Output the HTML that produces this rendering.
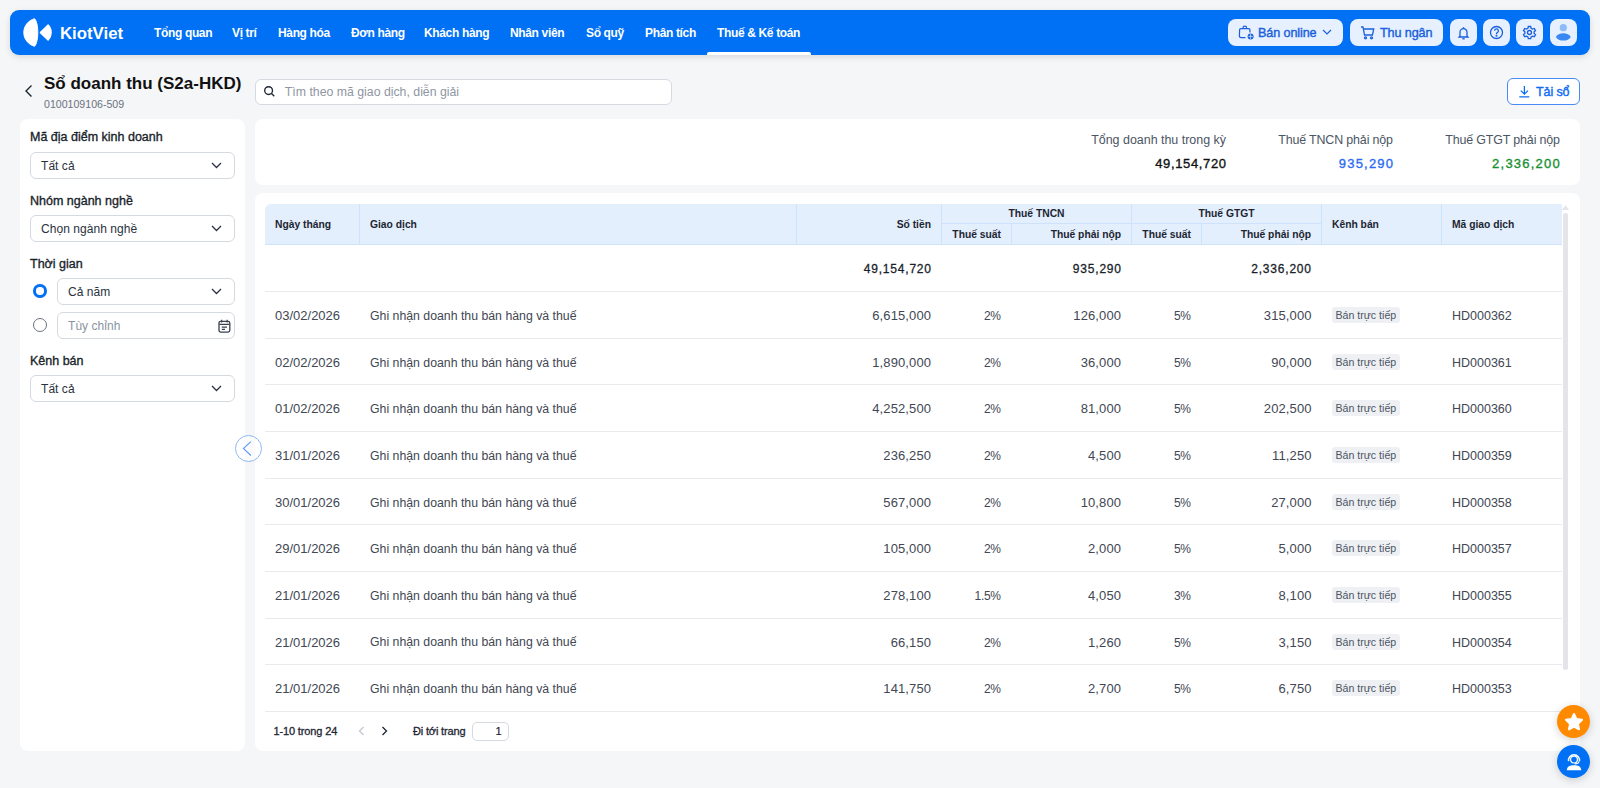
<!DOCTYPE html>
<html lang="vi"><head><meta charset="utf-8"><title>Sổ doanh thu</title>
<style>
*{box-sizing:border-box;margin:0;padding:0}
html,body{width:1600px;height:788px;overflow:hidden}
body{background:#F5F6F8;font-family:"Liberation Sans",sans-serif;color:#1E2532;position:relative}
.abs{position:absolute}
/* navbar */
.nav{position:absolute;left:10px;top:10px;width:1580px;height:45px;background:#0070F4;border-radius:9px;box-shadow:0 2px 6px rgba(0,0,0,.12)}
.logo{position:absolute;left:13px;top:8px}
.brand{position:absolute;left:50px;top:13.5px;font-weight:bold;font-size:16.8px;color:#fff;letter-spacing:0}
.menu{position:absolute;top:16px;font-size:12px;font-weight:bold;color:#fff;white-space:nowrap;letter-spacing:-0.35px}
.uline{position:absolute;left:697px;top:42px;width:104px;height:3px;background:#fff;border-radius:2px 2px 0 0}
.nbtn{position:absolute;top:9px;height:27px;background:#E6F0FE;border-radius:8px;color:#1A5FDC;font-size:12.6px;-webkit-text-stroke-width:0.4px;white-space:nowrap;letter-spacing:-0.1px}
.nbtn span{position:absolute;top:6.5px}
/* title */
.back{position:absolute;left:24px;top:84px}
.title{position:absolute;left:44px;top:73.5px;font-size:17px;font-weight:bold;color:#111;white-space:nowrap}
.sub{position:absolute;left:44px;top:98px;font-size:10.6px;color:#6B7280;white-space:nowrap}
.search{position:absolute;left:255px;top:78.7px;width:416.5px;height:26.3px;background:#fff;border:1px solid #D5D9E0;border-radius:6px}
.search .ph{position:absolute;left:28.8px;top:5.2px;font-size:12.3px;color:#8F96A3;white-space:nowrap}
.dl{position:absolute;left:1507px;top:78px;width:73px;height:27px;background:#fff;border:1px solid #4A8AF4;border-radius:6px;color:#0C6CF2;font-size:12.5px;-webkit-text-stroke-width:0.4px;letter-spacing:-0.1px}
/* sidebar */
.side{position:absolute;left:20px;top:119px;width:225px;height:632px;background:#fff;border-radius:8px}
.lbl{position:absolute;left:10px;font-size:12.5px;-webkit-text-stroke-width:0.35px;color:#1A1F2B;white-space:nowrap;margin-top:0.5px}
.sel{position:absolute;left:10px;width:205px;height:27px;border:1px solid #D5D9E0;border-radius:6px;background:#fff}
.sel .tx{position:absolute;left:10px;top:6.3px;font-size:12px;color:#2A3140;white-space:nowrap;letter-spacing:0.05px}
.sel svg{position:absolute;right:12px;top:9px}
.radio{position:absolute;left:13px;width:14px;height:14px;border-radius:50%}
/* summary card */
.card{position:absolute;background:#fff;border-radius:8px}
.sl{position:absolute;top:133px;font-size:12.45px;color:#4B5563;white-space:nowrap;text-align:right}
.sv{position:absolute;top:155.5px;font-size:13px;-webkit-text-stroke-width:0.35px;white-space:nowrap;text-align:right}
/* table */
.thead{position:absolute;left:265px;top:204px;width:1297px;height:41px;background:#E3EFFD;border-bottom:1px solid #D0E2FA;border-radius:6px 0 0 0}
.vs{position:absolute;width:1px;background:#CFE2FB}
.th{position:absolute;font-size:10.3px;font-weight:bold;color:#1E2532;white-space:nowrap}
.row{position:absolute;left:265px;width:1297px;height:46.65px;border-top:1px solid #E8EAEE}
.c{position:absolute;top:16.95px;font-size:12.3px;color:#414753;white-space:nowrap}
.date{left:10px;font-size:13px;top:16px}
.desc{left:105px}
.amt{top:16px;right:630.88px;font-size:13px;letter-spacing:0.12px}
.r1{top:17.2px;right:561.3px;font-size:12px;letter-spacing:-0.3px}
.t1{top:16px;right:440.88px;font-size:13px;letter-spacing:0.12px}
.r2{top:17.2px;right:371.3px;font-size:12px;letter-spacing:-0.3px}
.t2{top:16px;right:250.38px;font-size:13px;letter-spacing:0.12px}
.badge{position:absolute;left:1067px;top:15px;height:16px;padding:0 3.5px;background:#EEF0F3;border-radius:3px;font-size:10.6px;color:#4B5563;line-height:16px;white-space:nowrap}
.code{left:1187px;font-size:12.5px;top:17.2px}
.tot{position:absolute;top:261.5px;font-size:12px;letter-spacing:0.8px;-webkit-text-stroke:0.3px #1A1F2B;color:#1A1F2B;white-space:nowrap}
.pg{position:absolute;top:724.5px;font-size:11px;-webkit-text-stroke-width:0.3px;color:#1E2532;white-space:nowrap}
.fab{position:absolute;left:1557px;width:33px;height:33px;border-radius:50%;box-shadow:0 2px 8px rgba(0,0,0,.18)}

</style></head><body>
<div class="nav">
  <svg class="logo" width="32" height="30" viewBox="0 0 32 30">
    <path d="M11.6 0.7C4.9 2.6 0.8 8.3 0.8 14.5C0.8 20.7 4.9 26.4 11.6 28.3C13.7 26 14.8 20.3 14.8 14.5C14.8 8.7 13.7 3 11.6 0.7Z" fill="#fff" stroke="#fff" stroke-width="1" stroke-linejoin="round"/>
    <path d="M17.5 14.6L25.1 7C27.2 9.2 28.1 11.8 28.1 14.4C28.1 17 27.2 19.6 25.1 21.9Z" fill="#fff" stroke="#fff" stroke-width="1.5" stroke-linejoin="round"/>
  </svg>
  <div class="brand">KiotViet</div>
  <div class="menu" style="left:144px">Tổng quan</div>
  <div class="menu" style="left:222px">Vị trí</div>
  <div class="menu" style="left:268px">Hàng hóa</div>
  <div class="menu" style="left:341px">Đơn hàng</div>
  <div class="menu" style="left:414px">Khách hàng</div>
  <div class="menu" style="left:500px">Nhân viên</div>
  <div class="menu" style="left:576px">Sổ quỹ</div>
  <div class="menu" style="left:635px">Phân tích</div>
  <div class="menu" style="left:707px">Thuế &amp; Kế toán</div>
  <div class="uline"></div>
  <div class="nbtn" style="left:1218px;width:115px">
    <svg style="position:absolute;left:10px;top:6px" width="16" height="16" viewBox="0 0 16 16" fill="none" stroke="#1A5FDC" stroke-width="1.2"><path d="M5 3.6V3a1.8 1.8 0 0 1 3.6 0v.6"/><path d="M7.5 12.6H3.3a1.9 1.9 0 0 1-1.9-1.9L1.6 5a1.3 1.3 0 0 1 1.3-1.4h7.7A1.3 1.3 0 0 1 11.9 5l.1 2.5"/><circle cx="12.6" cy="11.4" r="3" fill="#1A5FDC" stroke="none"/><path d="M12.6 8.8v5.2M10.4 11.4h4.4" stroke="#E6F0FE" stroke-width=".7"/></svg>
    <span style="left:30px">Bán online</span>
    <svg style="position:absolute;left:94px;top:10px" width="10" height="7" viewBox="0 0 10 7" fill="none" stroke="#1A5FDC" stroke-width="1.2"><path d="M1 1l4 4 4-4"/></svg>
  </div>
  <div class="nbtn" style="left:1340px;width:93px">
    <svg style="position:absolute;left:10px;top:6px" width="15" height="15" viewBox="0 0 15 15" fill="none" stroke="#1A5FDC" stroke-width="1.3"><path d="M1 2h2l1.5 8h8l1.2-6H4"/><circle cx="5.5" cy="12.8" r="1"/><circle cx="11.5" cy="12.8" r="1"/></svg>
    <span style="left:30px">Thu ngân</span>
  </div>
  <div class="nbtn" style="left:1440px;width:27px">
    <svg style="position:absolute;left:6px;top:6px" width="15" height="15" viewBox="0 0 15 15" fill="none" stroke="#1A5FDC" stroke-width="1.3"><path d="M4 11V7.2a3.5 3.5 0 0 1 7 0V11l.9 1H3.1z"/><path d="M6.3 13.8h2.4"/><path d="M7.5 2.2v1.3"/></svg>
  </div>
  <div class="nbtn" style="left:1473px;width:27px">
    <svg style="position:absolute;left:6px;top:6px" width="15" height="15" viewBox="0 0 15 15" fill="none" stroke="#1A5FDC" stroke-width="1.3"><circle cx="7.5" cy="7.5" r="6"/><path d="M5.6 5.8a1.9 1.9 0 1 1 2.6 1.8c-.5.2-.7.6-.7 1.1v.5"/><circle cx="7.5" cy="10.8" r=".4" fill="#1A5FDC"/></svg>
  </div>
  <div class="nbtn" style="left:1506px;width:27px">
    <svg style="position:absolute;left:6px;top:6px" width="15" height="15" viewBox="0 0 15 15" fill="none" stroke="#1A5FDC" stroke-width="1.3"><path d="M6.3 1.5h2.4l.4 1.8 1.4.8 1.8-.6 1.2 2.1-1.4 1.2v1.6l1.4 1.2-1.2 2.1-1.8-.6-1.4.8-.4 1.8H6.3l-.4-1.8-1.4-.8-1.8.6-1.2-2.1 1.4-1.2V6.8L1.5 5.6l1.2-2.1 1.8.6 1.4-.8z"/><circle cx="7.5" cy="7.5" r="2"/></svg>
  </div>
  <div class="nbtn" style="left:1540px;width:27px">
    <svg style="position:absolute;left:5px;top:5px" width="17" height="17" viewBox="0 0 17 17"><circle cx="8.3" cy="3.7" r="3.6" fill="#8DBAF8"/><path d="M0.9 12.9C3 8.1 13.6 8.1 15.7 12.9C13.6 17.7 3 17.7 0.9 12.9Z" fill="#3A88F3"/></svg>
  </div>
</div>

<svg class="back" width="10" height="14" viewBox="0 0 10 14" fill="none" stroke="#1E2532" stroke-width="1.4"><path d="M7.5 1.5L2 7l5.5 5.5"/></svg>
<div class="title">Sổ doanh thu (S2a-HKD)</div>
<div class="sub">0100109106-509</div>

<div class="search">
  <svg style="position:absolute;left:6.5px;top:5.5px" width="13" height="13" viewBox="0 0 13 13" fill="none" stroke="#1E2532" stroke-width="1.35"><circle cx="5.6" cy="5.6" r="3.9"/><path d="M8.5 8.5l2.8 2.8"/></svg>
  <div class="ph">Tìm theo mã giao dịch, diễn giải</div>
</div>

<div class="dl">
  <svg style="position:absolute;left:10px;top:6px" width="13" height="14" viewBox="0 0 13 14" fill="none" stroke="#0C6CF2" stroke-width="1.3"><path d="M6.4 1v8M2.8 5.6l3.6 3.6L10 5.6M1.3 11.9h10"/></svg>
  <span style="position:absolute;left:28px;top:6px">Tải sổ</span>
</div>

<div class="side">
  <div class="lbl" style="top:10px">Mã địa điểm kinh doanh</div>
  <div class="sel" style="top:33px"><span class="tx">Tất cả</span><svg width="11" height="7" viewBox="0 0 11 7" fill="none" stroke="#2A3140" stroke-width="1.3"><path d="M1 1l4.5 4.5L10 1"/></svg></div>
  <div class="lbl" style="top:74px">Nhóm ngành nghề</div>
  <div class="sel" style="top:96px"><span class="tx">Chọn ngành nghề</span><svg width="11" height="7" viewBox="0 0 11 7" fill="none" stroke="#2A3140" stroke-width="1.3"><path d="M1 1l4.5 4.5L10 1"/></svg></div>
  <div class="lbl" style="top:137px">Thời gian</div>
  <div class="radio" style="top:165.3px;left:13.2px;width:13.4px;height:13.4px;border:3.4px solid #0070F4;background:#fff"></div>
  <div class="sel" style="top:159px;left:37px;width:178px"><span class="tx">Cả năm</span><svg width="11" height="7" viewBox="0 0 11 7" fill="none" stroke="#2A3140" stroke-width="1.3"><path d="M1 1l4.5 4.5L10 1"/></svg></div>
  <div class="radio" style="top:199px;border:1px solid #6B7280;background:#fff"></div>
  <div class="sel" style="top:193px;left:37px;width:178px"><span class="tx" style="color:#8A93A2">Tùy chỉnh</span>
    <svg style="position:absolute;left:159.5px;top:5.5px" width="13" height="14" viewBox="0 0 13 14" fill="none" stroke="#3A4150" stroke-width="1.3"><rect x="1" y="2.3" width="10.8" height="10.8" rx="1.8"/><path d="M3.6 0.8v2.6M9.2 0.8v2.6M1.2 5.4h10.4M3.8 8.1h5.2M3.8 10.4h3.2"/></svg></div>
  <div class="lbl" style="top:234px">Kênh bán</div>
  <div class="sel" style="top:256px"><span class="tx">Tất cả</span><svg width="11" height="7" viewBox="0 0 11 7" fill="none" stroke="#2A3140" stroke-width="1.3"><path d="M1 1l4.5 4.5L10 1"/></svg></div>
</div>

<div class="card" style="left:255px;top:119px;width:1325px;height:66px"></div>
<div class="sl" style="right:374px">Tổng doanh thu trong kỳ</div>
<div class="sv" style="right:373.4px;color:#111;letter-spacing:0.63px">49,154,720</div>
<div class="sl" style="right:207.15px;letter-spacing:-0.15px">Thuế TNCN phải nộp</div>
<div class="sv" style="right:205.8px;color:#2D6BF3;letter-spacing:1.2px">935,290</div>
<div class="sl" style="right:40.15px;letter-spacing:-0.15px">Thuế GTGT phải nộp</div>
<div class="sv" style="right:39px;color:#17902F;letter-spacing:1.23px">2,336,200</div>

<div class="card" style="left:255px;top:193px;width:1325px;height:558px"></div>
<div class="thead">
  <div class="vs" style="left:94px;top:0;height:40px"></div>
  <div class="vs" style="left:531px;top:0;height:40px"></div>
  <div class="vs" style="left:676px;top:0;height:40px"></div>
  <div class="vs" style="left:746px;top:19px;height:21px"></div>
  <div class="vs" style="left:866px;top:0;height:40px"></div>
  <div class="vs" style="left:936px;top:19px;height:21px"></div>
  <div class="vs" style="left:1056px;top:0;height:40px"></div>
  <div class="vs" style="left:1176px;top:0;height:40px"></div>
  <div style="position:absolute;left:677px;top:19px;width:379px;height:1px;background:#CFE2FB"></div>
  <div class="th" style="left:10px;top:15px">Ngày tháng</div>
  <div class="th" style="left:105px;top:15px">Giao dịch</div>
  <div class="th" style="right:631px;top:15px">Số tiền</div>
  <div class="th" style="left:677px;width:189px;text-align:center;top:4.3px">Thuế TNCN</div>
  <div class="th" style="right:561px;top:24.7px">Thuế suất</div>
  <div class="th" style="right:441px;top:24.7px">Thuế phải nộp</div>
  <div class="th" style="left:867px;width:189px;text-align:center;top:4.3px">Thuế GTGT</div>
  <div class="th" style="right:371px;top:24.7px">Thuế suất</div>
  <div class="th" style="right:251px;top:24.7px">Thuế phải nộp</div>
  <div class="th" style="left:1067px;top:15px">Kênh bán</div>
  <div class="th" style="left:1187px;top:15px">Mã giao dịch</div>
</div>
<div class="tot" style="right:668.2px">49,154,720</div>
<div class="tot" style="right:478.2px">935,290</div>
<div class="tot" style="right:288.2px">2,336,200</div>
<div class="row" style="top:291.00px">
<span class="c date">03/02/2026</span><span class="c desc">Ghi nhận doanh thu bán hàng và thuế</span><span class="c amt">6,615,000</span><span class="c r1">2%</span><span class="c t1">126,000</span><span class="c r2">5%</span><span class="c t2">315,000</span><span class="badge">Bán trực tiếp</span><span class="c code">HD000362</span></div>
<div class="row" style="top:337.65px">
<span class="c date">02/02/2026</span><span class="c desc">Ghi nhận doanh thu bán hàng và thuế</span><span class="c amt">1,890,000</span><span class="c r1">2%</span><span class="c t1">36,000</span><span class="c r2">5%</span><span class="c t2">90,000</span><span class="badge">Bán trực tiếp</span><span class="c code">HD000361</span></div>
<div class="row" style="top:384.30px">
<span class="c date">01/02/2026</span><span class="c desc">Ghi nhận doanh thu bán hàng và thuế</span><span class="c amt">4,252,500</span><span class="c r1">2%</span><span class="c t1">81,000</span><span class="c r2">5%</span><span class="c t2">202,500</span><span class="badge">Bán trực tiếp</span><span class="c code">HD000360</span></div>
<div class="row" style="top:430.95px">
<span class="c date">31/01/2026</span><span class="c desc">Ghi nhận doanh thu bán hàng và thuế</span><span class="c amt">236,250</span><span class="c r1">2%</span><span class="c t1">4,500</span><span class="c r2">5%</span><span class="c t2">11,250</span><span class="badge">Bán trực tiếp</span><span class="c code">HD000359</span></div>
<div class="row" style="top:477.60px">
<span class="c date">30/01/2026</span><span class="c desc">Ghi nhận doanh thu bán hàng và thuế</span><span class="c amt">567,000</span><span class="c r1">2%</span><span class="c t1">10,800</span><span class="c r2">5%</span><span class="c t2">27,000</span><span class="badge">Bán trực tiếp</span><span class="c code">HD000358</span></div>
<div class="row" style="top:524.25px">
<span class="c date">29/01/2026</span><span class="c desc">Ghi nhận doanh thu bán hàng và thuế</span><span class="c amt">105,000</span><span class="c r1">2%</span><span class="c t1">2,000</span><span class="c r2">5%</span><span class="c t2">5,000</span><span class="badge">Bán trực tiếp</span><span class="c code">HD000357</span></div>
<div class="row" style="top:570.90px">
<span class="c date">21/01/2026</span><span class="c desc">Ghi nhận doanh thu bán hàng và thuế</span><span class="c amt">278,100</span><span class="c r1">1.5%</span><span class="c t1">4,050</span><span class="c r2">3%</span><span class="c t2">8,100</span><span class="badge">Bán trực tiếp</span><span class="c code">HD000355</span></div>
<div class="row" style="top:617.55px">
<span class="c date">21/01/2026</span><span class="c desc">Ghi nhận doanh thu bán hàng và thuế</span><span class="c amt">66,150</span><span class="c r1">2%</span><span class="c t1">1,260</span><span class="c r2">5%</span><span class="c t2">3,150</span><span class="badge">Bán trực tiếp</span><span class="c code">HD000354</span></div>
<div class="row" style="top:664.20px">
<span class="c date">21/01/2026</span><span class="c desc">Ghi nhận doanh thu bán hàng và thuế</span><span class="c amt">141,750</span><span class="c r1">2%</span><span class="c t1">2,700</span><span class="c r2">5%</span><span class="c t2">6,750</span><span class="badge">Bán trực tiếp</span><span class="c code">HD000353</span></div>
<div style="position:absolute;left:265px;top:711px;width:1297px;height:1px;background:#E8EAEE"></div>
<div style="position:absolute;left:1563px;top:213px;width:5px;height:457px;background:#E3E5E9;border-radius:3px"></div>
<svg style="position:absolute;left:1562px;top:205px" width="7" height="5" viewBox="0 0 7 5"><path d="M0 5L3.5 0L7 5z" fill="#E3E5E9"/></svg>

<div class="pg" style="left:273.5px;letter-spacing:-0.14px">1-10 trong 24</div>
<svg style="position:absolute;left:358px;top:726px" width="7" height="10" viewBox="0 0 7 10" fill="none" stroke="#C4C8CF" stroke-width="1.3"><path d="M5.5 1L1.5 5l4 4"/></svg>
<svg style="position:absolute;left:380.5px;top:726px" width="7" height="10" viewBox="0 0 7 10" fill="none" stroke="#1E2532" stroke-width="1.3"><path d="M1.5 1l4 4-4 4"/></svg>
<div class="pg" style="left:413px;letter-spacing:-0.16px">Đi tới trang</div>
<div style="position:absolute;left:471.5px;top:721.5px;width:37px;height:19.5px;border:1px solid #D5D9E0;border-radius:5px;background:#fff"><span style="position:absolute;right:6px;top:2px;font-size:11px;-webkit-text-stroke-width:0.2px;color:#1E2532">1</span></div>

<div style="position:absolute;left:235px;top:435px;width:27px;height:27px;border-radius:50%;border:1px solid #8DB8F5;background:rgba(255,255,255,.6)">
</div>
<svg style="position:absolute;left:240px;top:438px" width="14" height="20" viewBox="0 0 14 20" fill="none" stroke="#5E9DF4" stroke-width="1.1"><path d="M10.9 3.6L3.4 10.5L10.9 17.5"/></svg>

<div class="fab" style="top:705px;background:#FF8A00">
  <svg style="position:absolute;left:5.5px;top:6px" width="22" height="22" viewBox="0 0 24 24"><path d="M12 3.2l2.7 5.6 6.1.8-4.5 4.3 1.2 6.1L12 17l-5.5 3 1.2-6.1-4.5-4.3 6.1-.8z" fill="#fff" stroke="#fff" stroke-width="2.2" stroke-linejoin="round"/></svg>
</div>
<div class="fab" style="top:745px;background:#0070F4">
  <svg style="position:absolute;left:6.5px;top:6.5px" width="20" height="20" viewBox="0 0 20 20" fill="none"><circle cx="10" cy="7.6" r="3.4" stroke="#fff" stroke-width="1.2"/><path d="M4.6 9.2A5.5 5.5 0 1 1 15.4 9.2" stroke="#fff" stroke-width="1.5"/><path d="M15.2 9.4C14.8 11.3 13 12 10.6 11.8" stroke="#fff" stroke-width="1.1"/><path d="M2.8 18.3C2.8 14.6 6 13.3 10 13.3S17.2 14.6 17.2 18.3Z" fill="#fff"/></svg>
</div>

</body></html>
